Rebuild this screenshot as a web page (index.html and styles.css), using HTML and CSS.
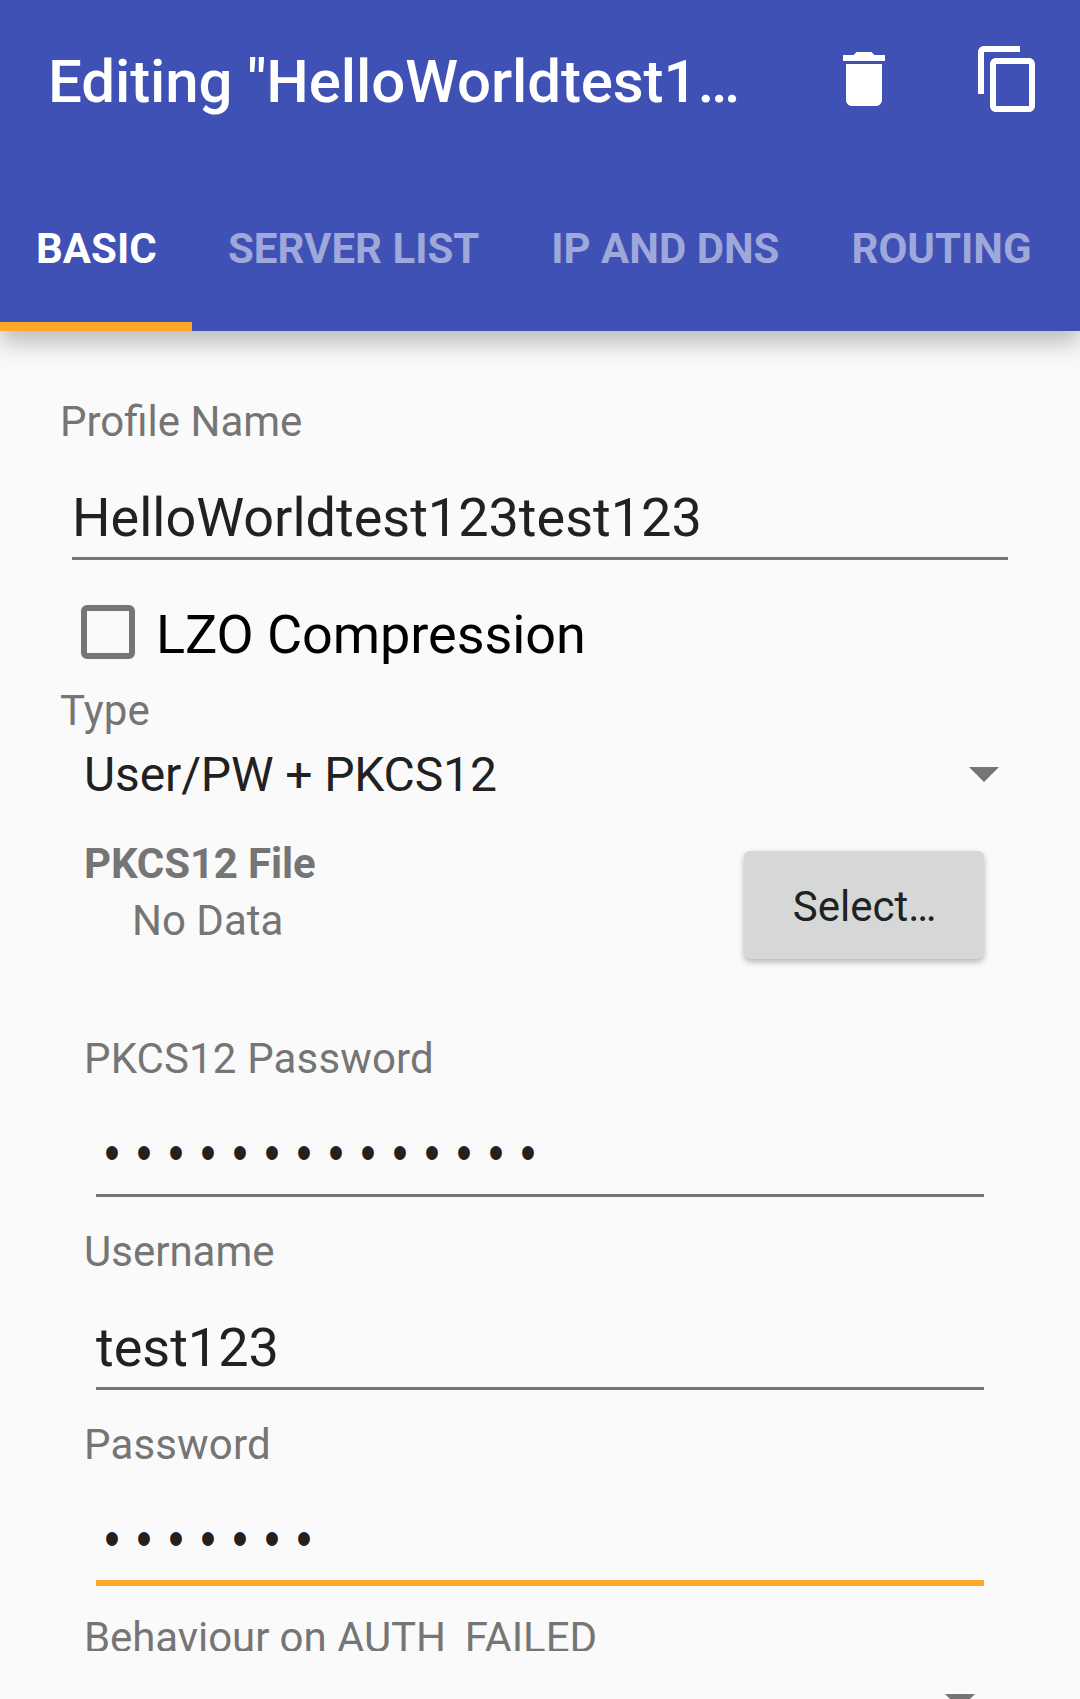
FILE: index.html
```html
<!DOCTYPE html>
<html lang="en">
<head>
<meta charset="utf-8">
<title>Edit profile</title>
<link rel="stylesheet" href="styles.css">
</head>
<body>
<div class="screen">
  <header class="appbar">
    <div class="toolbar">
      <h1 class="title">Editing "HelloWorldtest1…</h1>
      <div class="actions">
        <svg class="icon" viewBox="0 0 24 24" aria-label="Delete"><path d="M6 19c0 1.100.9 2 2 2h8c1.100 0 2-.9 2-2V7H6v12zM19 4h-3.500l-1-1h-5l-1 1H5v2h14V4z"/></svg>
        <svg class="icon" viewBox="0 0 24 24" aria-label="Duplicate"><path d="M16 1H4c-1.100 0-2 .9-2 2v14h2V3h12V1zm3 4H8c-1.100 0-2 .9-2 2v14c0 1.100.9 2 2 2h11c1.100 0 2-.9 2-2V7c0-1.100-.9-2-2-2zm0 16H8V7h11v14z"/></svg>
      </div>
    </div>
    <nav class="tabs">
      <span class="tab active">BASIC</span>
      <span class="tab">SERVER LIST</span>
      <span class="tab">IP AND DNS</span>
      <span class="tab">ROUTING</span>
    </nav>
  </header>
  <main class="form">
    <div class="label">Profile Name</div>
    <div class="field">HelloWorldtest123test123</div>
    <div class="check"><span class="box"></span><span>LZO Compression</span></div>
    <div class="label loose">Type</div>
    <section class="group">
      <div class="spinner"><span>User/PW + PKCS12</span><svg class="arrow" viewBox="0 0 30 15"><path d="M0 0h30L15 15z"/></svg></div>
      <div class="file">
        <div class="file-text"><div class="label strong">PKCS12 File</div><div class="label value">No Data</div></div>
        <button class="select">Select…</button>
      </div>
      <div class="label loose first">PKCS12 Password</div>
      <div class="field"><span class="dots">••••••••••••••</span></div>
      <div class="label next">Username</div>
      <div class="field">test123</div>
      <div class="label loose next">Password</div>
      <div class="field focused"><span class="dots">•••••••</span></div>
      <div class="label cut">Behaviour on AUTH_FAILED</div>
      <div class="spinner second"><svg class="arrow" viewBox="0 0 30 15"><path d="M0 0h30L15 15z"/></svg></div>
    </section>
  </main>
</div>
</body>
</html>
```
FILE: styles.css
```css
* { box-sizing: border-box; }
body { margin: 0; background: #fafafa; font-family: Roboto, "Liberation Sans", sans-serif; color: #212121; }
.screen { width: 1080px; height: 1699px; overflow: hidden; }

.appbar { height: 331px; background: #3f51b5; color: #fff; box-shadow: 0 12px 22px rgba(0, 0, 0, .25); }
.toolbar { display: flex; justify-content: space-between; align-items: flex-start; height: 187px; padding: 43px 36px 0 48px; }
.title { margin: 3px 0 0; font-size: 60px; font-weight: 500; line-height: 71px; letter-spacing: -.1px; white-space: nowrap; }
.actions { display: flex; gap: 72px; }
.icon { display: block; width: 72px; height: 72px; fill: #fff; }
.tabs { display: flex; height: 144px; }
.tab { padding: 37px 36px 0; font-size: 42px; line-height: 49px; font-weight: 700; color: #9fa8da; white-space: nowrap; }
.tab.active { width: 192px; color: #fff; border-bottom: 9px solid #ffa726; }

.form { padding: 66px 60px 0; }
.label { font-size: 42px; line-height: 49px; color: #757575; white-space: pre; }
.label.loose { letter-spacing: .15px; }
.field { height: 74px; margin: 40px 12px 0; font-size: 54px; line-height: 63px; border-bottom: 3px solid #757575; }
.check { display: flex; gap: 21px; height: 83px; margin-top: 43px; padding-left: 21px; font-size: 54px; line-height: 63px; letter-spacing: -.07px; color: #000; }
.box { width: 54px; height: 54px; margin-top: 2px; border: 6px solid #757575; border-radius: 6px; }

.group { padding: 0 24px; }
.spinner { display: flex; justify-content: space-between; align-items: flex-start; height: 68px; padding-top: 11px; font-size: 48px; line-height: 57px; letter-spacing: -.12px; }
.arrow { display: block; width: 30px; height: 15px; margin: 21px -3px 0 0; fill: #757575; }
.file { display: flex; justify-content: space-between; align-items: flex-start; margin-top: 36px; }
.strong { font-weight: 700; letter-spacing: -.15px; }
.value { margin-top: 8px; padding-left: 48px; }
.select { width: 240px; height: 108px; margin: 12px 12px 0 0; padding: 3px 0 0 1px; border: 0; border-radius: 6px; background: #d6d7d7; color: #212121; font: 42px/49px Roboto, "Liberation Sans", sans-serif; box-shadow: 0 3px 6px rgba(0, 0, 0, .28); }
.first { margin-top: 75px; }
.next { margin-top: 30px; }
.field.focused { height: 77px; border-bottom: 6px solid #ffa726; }
/* Mask characters are narrower than they are tall */
.dots { display: block; font-family: "Liberation Mono", monospace; font-size: 51px; letter-spacing: 7.05px; transform: translate(3px, 2px) scaleX(.85); transform-origin: left; }
.cut { height: 38px; margin-top: 27px; overflow: hidden; letter-spacing: -.08px; }
.spinner.second { justify-content: flex-end; padding: 0; }
.spinner.second .arrow { margin: 43px 21px 0 0; }
```
